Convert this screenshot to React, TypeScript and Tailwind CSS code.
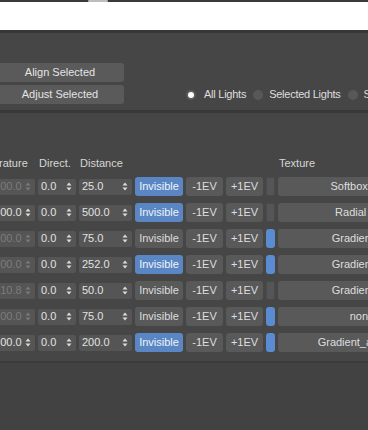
import React from 'react';

type Row = {
  temp: string;
  tempOn: boolean;
  dir: string;
  dist: string;
  invisible: boolean;
  swatch: boolean;
  texture: string;
};

const ROWS: Row[] = [
  { temp: '6500.0', tempOn: false, dir: '0.0', dist: '25.0', invisible: true, swatch: false, texture: 'Softbox Strip' },
  { temp: '6500.0', tempOn: true, dir: '0.0', dist: '500.0', invisible: true, swatch: false, texture: 'Radial Soft' },
  { temp: '6500.0', tempOn: false, dir: '0.0', dist: '75.0', invisible: false, swatch: true, texture: 'Gradient_01' },
  { temp: '6500.0', tempOn: false, dir: '0.0', dist: '252.0', invisible: true, swatch: true, texture: 'Gradient_02' },
  { temp: '4010.8', tempOn: false, dir: '0.0', dist: '50.0', invisible: false, swatch: false, texture: 'Gradient_03' },
  { temp: '6500.0', tempOn: false, dir: '0.0', dist: '75.0', invisible: false, swatch: true, texture: 'none' },
  { temp: '6500.0', tempOn: true, dir: '0.0', dist: '200.0', invisible: true, swatch: true, texture: 'Gradient_area_01' },
];

// up / down spinner arrows
const Arrows = ({ dim }: { dim?: boolean }) => (
  <svg width="6" height="9" viewBox="0 0 6 9" className={dim ? 'text-[#7a7a7a]' : 'text-[#dcdcdc]'}>
    <path d="M3 0.5 L5.5 3.5 L0.5 3.5 Z" fill="currentColor" />
    <path d="M3 8.5 L5.5 5.5 L0.5 5.5 Z" fill="currentColor" />
  </svg>
);

const Spinner = ({ value, width, dim }: { value: string; width: string; dim?: boolean }) => (
  <div className={`${width} h-[16px] shrink-0 flex items-center justify-between pl-[3px] pr-[4px] bg-[#555555] rounded-[2px] ${dim ? 'text-[#7c7c7c]' : 'text-[#e2e2e2]'}`}>
    <span>{value}</span>
    <Arrows dim={dim} />
  </div>
);

const Btn = ({ children, width, blue }: { children: React.ReactNode; width: string; blue?: boolean }) => (
  <div
    className={`${width} h-[19px] shrink-0 flex items-center justify-center rounded-[3px] ${
      blue ? 'bg-[#5a87c4] text-[#eef3fb]' : 'bg-[#595959] text-[#dedede]'
    }`}
  >
    {children}
  </div>
);

export default function App() {
  return (
    <div
      className="w-[368px] h-[430px] overflow-hidden bg-[#464646] text-[11px] leading-none text-[#dedede] flex flex-col"
      style={{ fontFamily: '"Liberation Sans", Arial, sans-serif' }}
    >
      {/* window strip above */}
      <div className="h-[2px] bg-[#3a3a3a] flex shrink-0">
        <div className="ml-[88px] w-[20px] h-[2px] bg-[#bdbdbd] rounded-full" />
      </div>
      <div className="h-[28px] bg-white shrink-0" />
      <div className="h-[3px] bg-[#363636] shrink-0" />

      {/* top controls */}
      <div className="h-[77px] shrink-0 flex items-end pb-[6px]">
        <div className="flex flex-col gap-[3px] ml-[-4px] shrink-0">
          <div className="w-[128px] h-[19px] flex items-center justify-center bg-[#5a5a5a] rounded-[3px] text-[#e4e4e4]">
            Align Selected
          </div>
          <div className="w-[128px] h-[19px] flex items-center justify-center bg-[#5a5a5a] rounded-[3px] text-[#e4e4e4]">
            Adjust Selected
          </div>
        </div>
        <div className="flex items-center ml-[62px] mb-[4px] whitespace-nowrap shrink-0 tracking-[-0.25px]">
          <div className="w-[10px] h-[10px] rounded-full bg-[#5a5a5a] flex items-center justify-center">
            <div className="w-[6px] h-[6px] rounded-full bg-white" />
          </div>
          <span className="ml-[8px]">All Lights</span>
          <div className="w-[10px] h-[10px] rounded-full bg-[#585858] ml-[7px]" />
          <span className="ml-[6px]">Selected Lights</span>
          <div className="w-[10px] h-[10px] rounded-full bg-[#585858] ml-[7px]" />
          <span className="ml-[6px]">Scene Lights</span>
        </div>
      </div>

      {/* separator */}
      <div className="h-[3px] bg-[#393939] shrink-0" />

      {/* header */}
      <div className="flex mt-[45px] ml-[-37px] whitespace-nowrap text-[#d6d6d6] shrink-0">
        <div className="w-[76px] shrink-0 pl-[3px]">Temperature</div>
        <div className="w-[41px] shrink-0">Direct.</div>
        <div className="w-[199px] shrink-0">Distance</div>
        <div className="shrink-0">Texture</div>
      </div>

      {/* light rows */}
      <div className="flex flex-col gap-[7px] mt-[8px] ml-[-15px] shrink-0">
        {ROWS.map((r, i) => (
          <div key={i} className="flex items-center gap-[3px] h-[19px] whitespace-nowrap">
            <Spinner value={r.temp} width="w-[50px]" dim={!r.tempOn} />
            <Spinner value={r.dir} width="w-[38px]" />
            <Spinner value={r.dist} width="w-[53px]" />
            <Btn width="w-[48px]" blue={r.invisible}>Invisible</Btn>
            <Btn width="w-[37px]">-1EV</Btn>
            <Btn width="w-[37px]">+1EV</Btn>
            {r.swatch ? (
              <div className="w-[9px] h-[19px] shrink-0 rounded-[3px] bg-[#5b8bd0]" />
            ) : (
              <div className="w-[9px] h-[19px] shrink-0 rounded-[2px] bg-[#555555] border border-[#4a4a4a]" />
            )}
            <div className="w-[168px] h-[19px] shrink-0 flex items-center justify-center bg-[#595959] rounded-[3px] text-[#dedede]">
              {r.texture}
            </div>
          </div>
        ))}
      </div>

      {/* bottom area */}
      <div className="h-[4px] mt-[5px] shrink-0" />
      <div className="h-[2px] bg-[#3b3b3b] shrink-0" />
      <div className="flex-1 bg-[#424242]" />
    </div>
  );
}
